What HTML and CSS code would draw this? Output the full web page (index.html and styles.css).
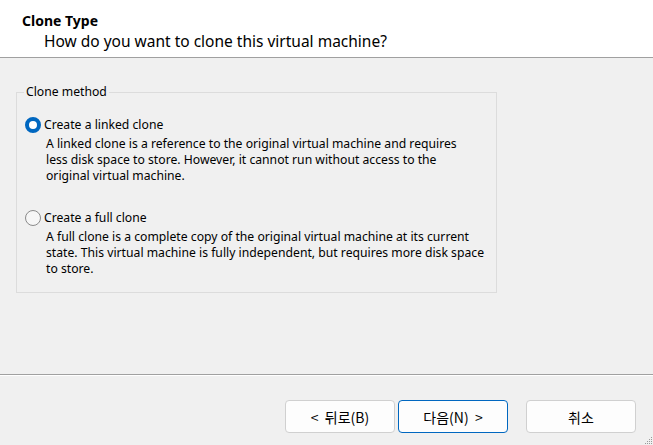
FILE: index.html
```html
<!DOCTYPE html>
<html lang="en">
<head>
<meta charset="UTF-8" />
<title>Clone Virtual Machine Wizard</title>
<link rel="stylesheet" href="styles.css">
</head>
<body>

<div class="wizard">
  <div class="header">
    <div class="title">Clone Type</div>
    <div class="subtitle">How do you want to clone this virtual machine?</div>
  </div>

  <div class="content">
    <fieldset class="group">
      <legend>Clone method</legend>

      <label class="option">
        <span class="radio checked"></span>
        <span class="option-text">
          <span class="option-label">Create a linked clone</span>
          <span class="option-desc">A linked clone is a reference to the original virtual machine and requires
less disk space to store. However, it cannot run without access to the
original virtual machine.</span>
        </span>
      </label>

      <label class="option">
        <span class="radio"></span>
        <span class="option-text">
          <span class="option-label">Create a full clone</span>
          <span class="option-desc">A full clone is a complete copy of the original virtual machine at its current
state. This virtual machine is fully independent, but requires more disk space
to store.</span>
        </span>
      </label>
    </fieldset>
  </div>

  <div class="footer">
    <button class="btn">&lt;&nbsp; 뒤로(B)</button>
    <button class="btn default">다음(N)&nbsp; &gt;</button>
    <button class="btn cancel">취소</button>
  </div>

  <!-- size grip in the corner -->
  <svg class="grip" width="10" height="10" viewBox="0 0 10 10">
    <rect x="8" y="2" width="1" height="1" fill="#9a9a9a"/>
    <rect x="6" y="4" width="1" height="1" fill="#9a9a9a"/>
    <rect x="8" y="4" width="1" height="1" fill="#9a9a9a"/>
    <rect x="4" y="6" width="1" height="1" fill="#9a9a9a"/>
    <rect x="6" y="6" width="1" height="1" fill="#9a9a9a"/>
    <rect x="8" y="6" width="1" height="1" fill="#9a9a9a"/>
    <rect x="2" y="8" width="1" height="1" fill="#9a9a9a"/>
    <rect x="4" y="8" width="1" height="1" fill="#9a9a9a"/>
    <rect x="6" y="8" width="1" height="1" fill="#9a9a9a"/>
    <rect x="8" y="8" width="1" height="1" fill="#9a9a9a"/>
  </svg>
</div>

</body>
</html>
```

FILE: styles.css
```css
html, body {
  margin: 0; padding: 0;
  background: #f0f0f0;
  font-family: "Noto Sans", "Noto Sans CJK KR", sans-serif;
  color: #000;
}
.wizard {
  position: relative;
  width: 653px;
  height: 445px;
  display: flex;
  flex-direction: column;
  overflow: hidden;
}
.header {
  height: 58px;
  box-sizing: border-box;
  background: #fff;
  border-bottom: 1px solid #a0a0a0;
  padding: 12px 0 0 22px;
}
.title {
  font-size: 14px;
  font-weight: bold;
  line-height: 18px;
}
.subtitle {
  font-size: 15.5px;
  line-height: 22px;
  padding-left: 22px;
}
.content {
  height: 316px;
  padding: 26px 0 0 16px;
  box-sizing: border-box;
}
.group {
  width: 481px;
  height: 209px;
  box-sizing: border-box;
  margin: 0;
  padding: 17px 0 0 8px;
  border: 1px solid #dcdcdc;
  font-size: 12.2px;
}
.group legend {
  padding: 0 2px;
  margin-left: -1px;
  line-height: 16px;
}
.option {
  display: flex;
  align-items: flex-start;
  margin-bottom: 26px;
}
.radio {
  width: 16px;
  height: 16px;
  box-sizing: border-box;
  border-radius: 50%;
  border: 1px solid #8a8a8a;
  background: #f6f6f6;
  flex: none;
}
.radio.checked {
  border: 4px solid #0067c0;
  background: #fff;
}
.option-text {
  display: flex;
  flex-direction: column;
  padding-left: 3px;
}
.option-label {
  line-height: 16px;
  margin-bottom: 3px;
}
.option-desc {
  white-space: pre-line;
  line-height: 16px;
  padding-left: 2px;
}
.footer {
  border-top: 1px solid #a0a0a0;
  box-shadow: inset 0 1px 0 #fff;
  flex: 1;
  display: flex;
  justify-content: flex-end;
  align-items: flex-start;
  padding: 25px 17px 0 0;
}
.btn {
  width: 110px;
  height: 33px;
  box-sizing: border-box;
  background: #fdfdfd;
  border: 1px solid #d0d0d0;
  border-radius: 4px;
  font-family: "Noto Sans CJK KR", "Noto Sans", sans-serif;
  font-size: 14px;
  color: #000;
  margin-left: 3px;
  padding: 0;
}
.btn.default {
  border-color: #0067c0;
}
.btn.cancel {
  margin-left: 18px;
}
.grip {
  position: absolute;
  right: 0;
  bottom: 0;
}
```
